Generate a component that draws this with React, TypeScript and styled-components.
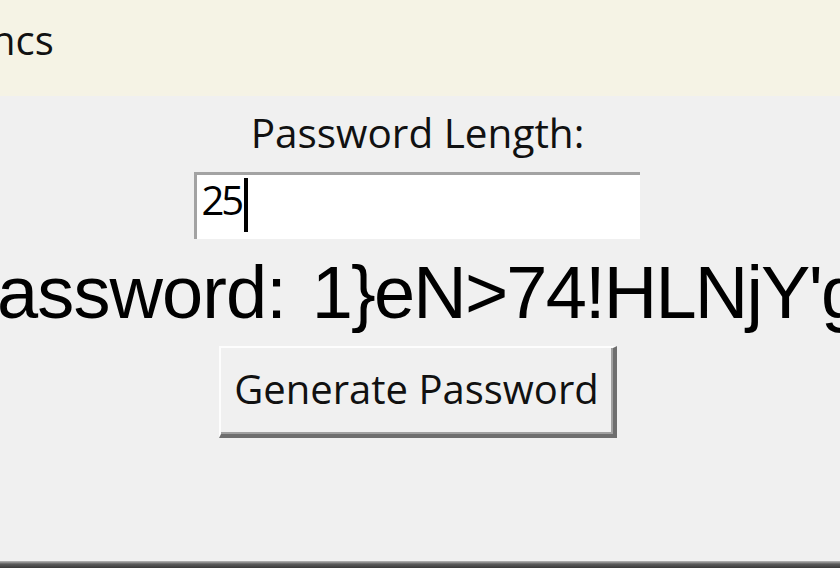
import React from "react"
import styled, { createGlobalStyle } from "styled-components"

const GlobalStyle = createGlobalStyle`
	html, body {
		margin: 0;
		padding: 0;
		background: #f0f0f0;
		overflow: hidden;
	}
`

const uiFont = `"Open Sans", "Noto Sans", sans-serif`

const password = "1}eN>74!HLNjY'g"

const Window = styled.div`
	width: 840px;
	height: 568px;
	display: flex;
	flex-direction: column;
	overflow: hidden;
	background: #f0f0f0;
`

const TitleBar = styled.div`
	height: 96px;
	flex-shrink: 0;
	box-sizing: border-box;
	padding-top: 20px;
	background: #f5f3e5;
	font-family: ${uiFont};
	font-size: 40px;
	line-height: 1;
	color: #111;
`

const TitleText = styled.span`
	display: inline-block;
	margin-left: -9px;
`

const Main = styled.main`
	flex: 1;
	display: flex;
	flex-direction: column;
	align-items: center;
	padding: 17px 5px 0 0;
`

const Label = styled.div`
	font-family: ${uiFont};
	font-size: 40.5px;
	line-height: 1;
	color: #111;
	white-space: nowrap;
`

const Entry = styled.div`
	width: 446px;
	height: 67px;
	margin-top: 18px;
	box-sizing: border-box;
	display: flex;
	align-items: flex-start;
	padding: 5px 0 0 5px;
	background: #fff;
	border-top: 3px solid #a3a3a3;
	border-left: 3px solid #a3a3a3;
	font-family: ${uiFont};
	font-size: 40px;
	letter-spacing: -3px;
	line-height: 1;
	color: #000;
	transform: translateX(-1px);
`

const Caret = styled.span`
	display: inline-block;
	width: 4px;
	height: 54px;
	margin: -2px 0 0 3px;
	background: #000;
`

const Result = styled.div`
	margin: 17px 26px 0 0;
	font-family: "Liberation Sans", Arial, sans-serif;
	font-size: 74px;
	letter-spacing: -1.8px;
	word-spacing: 6px;
	line-height: 1;
	color: #000;
	white-space: nowrap;
	flex-shrink: 0;
`

const ResultPrefix = styled.span`
	letter-spacing: -0.9px;
`

const Button = styled.button`
	width: 398px;
	height: 92px;
	margin-top: 16px;
	box-sizing: border-box;
	display: flex;
	align-items: center;
	justify-content: center;
	padding: 0 0 4px 0;
	background: #f0f0f0;
	border-style: solid;
	border-width: 2px 4px 4px 2px;
	border-color: #fdfdfd #6e6e6e #6e6e6e #fdfdfd;
	box-shadow: inset -2px -2px 0 #a0a0a0;
	font-family: ${uiFont};
	font-size: 40px;
	line-height: 1;
	color: #111;
	cursor: pointer;
`

const BottomEdge = styled.div`
	height: 7px;
	flex-shrink: 0;
	background: linear-gradient(#b8b8b8, #5a5a5a 45%, #3a3a3a);
`

export default function App() {
	return (
		<>
			<GlobalStyle />
			<Window>
				<TitleBar>
					<TitleText>ncs</TitleText>
				</TitleBar>
				<Main>
					<Label>Password Length:</Label>
					<Entry>
						25
						<Caret />
					</Entry>
					<Result>
						<ResultPrefix>Password: </ResultPrefix>
						{password}
					</Result>
					<Button type="button">Generate Password</Button>
				</Main>
				<BottomEdge />
			</Window>
		</>
	)
}
